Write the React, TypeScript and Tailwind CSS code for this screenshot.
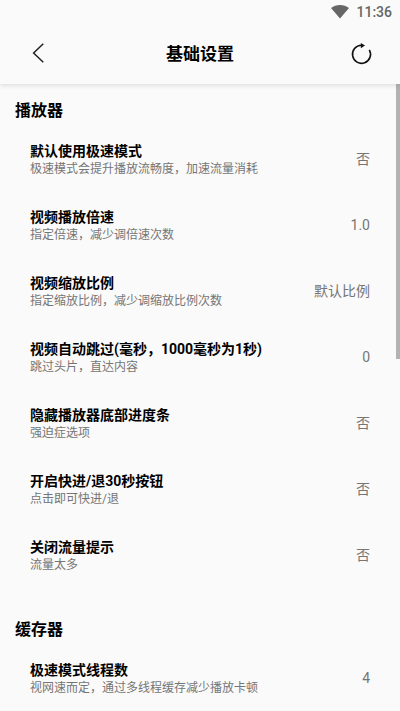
const playerRows = [
  ['默认使用极速模式', '极速模式会提升播放流畅度，加速流量消耗', '否'],
  ['视频播放倍速', '指定倍速，减少调倍速次数', '1.0'],
  ['视频缩放比例', '指定缩放比例，减少调缩放比例次数', '默认比例'],
  ['视频自动跳过(毫秒，1000毫秒为1秒)', '跳过头片，直达内容', '0'],
  ['隐藏播放器底部进度条', '强迫症选项', '否'],
  ['开启快进/退30秒按钮', '点击即可快进/退', '否'],
  ['关闭流量提示', '流量太多', '否'],
];
const cacheRows = [['极速模式线程数', '视网速而定，通过多线程缓存减少播放卡顿', '4']];

function Row({ row }: { row: string[] }) {
  return (
    <div className="flex h-[66px] items-center justify-between px-[30px]">
      <div className="pt-px">
        <div className="text-[14px] leading-[18px] font-bold text-black">{row[0]}</div>
        <div className="mt-px text-[12px] leading-[17px] text-[#757575]">{row[1]}</div>
      </div>
      <div className="text-[14px] leading-[18px] text-[#757575]">{row[2]}</div>
    </div>
  );
}

export default function App() {
  return (
    <div className="flex h-[711px] w-[400px] flex-col overflow-hidden bg-[#fafafa] font-[Roboto,'Noto_Sans_CJK_SC',sans-serif]">
      <header className="z-10 shrink-0 bg-[#fafafa] shadow-[0_2px_4px_rgba(0,0,0,0.1)]">
        <div className="flex h-6 items-center justify-end pr-2 text-[14px] font-medium text-[#666]">
          <svg className="mr-[7px]" width="18" height="14" viewBox="0 0 18 14"><path d="M0 3C5-.9 13-.9 18 3L9 13.5Z" fill="#666" /></svg>
          <span>11:36</span>
        </div>
        <div className="flex h-[60px] items-center justify-between pl-[30px] pr-[27px]">
          <svg className="-mt-[2px]" width="24" height="24" viewBox="0 0 24 24" fill="none" stroke="#222" strokeWidth="1.5"><path d="M13.3 2.8 3.6 12l9.7 9.2" /></svg>
          <h1 className="-ml-[3px] pt-[2px] text-[17px] font-bold text-black">基础设置</h1>
          <svg width="24" height="24" viewBox="0 0 24 24" fill="none" stroke="#111" strokeWidth="1.6"><path d="M20.3 7.8A9 9 0 1 1 12.4 3.3" /><path d="M11.8 1l4.2 2.4-4.2 2.8Z" fill="#111" stroke="none" /></svg>
        </div>
      </header>
      <div className="flex min-h-0 grow">
        <main className="min-w-0 grow">
          <h2 className="flex h-[42px] items-center pl-[15px] pt-[12px] text-[16px] font-bold">播放器</h2>
          {playerRows.map((r) => <Row key={r[0]} row={r} />)}
          <h2 className="flex h-[57px] items-center pl-[15px] pt-[26px] text-[16px] font-bold">缓存器</h2>
          {cacheRows.map((r) => <Row key={r[0]} row={r} />)}
        </main>
        <div className="-ml-1 h-[275px] w-1 bg-[#b2b2b2]" />
      </div>
    </div>
  );
}
